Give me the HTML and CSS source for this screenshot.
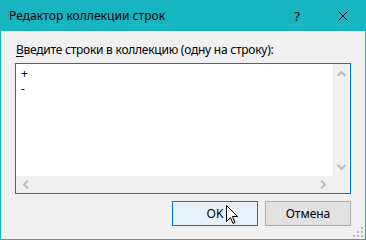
FILE: index.html
```html
<!DOCTYPE html>
<html lang="ru">
<head>
    <meta charset="UTF-8">
    <title>Редактор коллекции строк</title>
    <link rel="stylesheet" href="styles.css">
</head>
<body>

    <div class="window">

        <!-- Заголовок окна -->
        <div class="titlebar">
            <span class="title">Редактор коллекции строк</span>
            <span class="caption-btn">?</span>
            <span class="caption-btn">
                <svg width="10" height="10" viewBox="0 0 10 10"><path d="M0.5 0.5 L9.5 9.5 M9.5 0.5 L0.5 9.5" stroke="#000" stroke-width="1" fill="none"/></svg>
            </span>
        </div>

        <div class="content">
            <div class="label"><u>В</u>ведите строки в коллекцию (одну на строку):</div>

            <div class="textbox">
                <div class="text">
                    <div class="line">+</div>
                    <div class="line">-</div>
                </div>
                <div class="vscroll">
                    <svg width="9" height="6" viewBox="0 0 9 6"><path d="M0.5 5 L4.5 1 L8.5 5" stroke="#bdbdbd" stroke-width="2" fill="none"/></svg>
                    <svg width="9" height="6" viewBox="0 0 9 6"><path d="M0.5 1 L4.5 5 L8.5 1" stroke="#bdbdbd" stroke-width="2" fill="none"/></svg>
                </div>
                <div class="hscroll">
                    <svg width="6" height="9" viewBox="0 0 6 9"><path d="M5 0.5 L1 4.5 L5 8.5" stroke="#bdbdbd" stroke-width="2" fill="none"/></svg>
                    <svg width="6" height="9" viewBox="0 0 6 9"><path d="M1 0.5 L5 4.5 L1 8.5" stroke="#bdbdbd" stroke-width="2" fill="none"/></svg>
                </div>
                <div class="corner"></div>
            </div>

            <div class="buttons">
                <div class="btn btn-default">OK</div>
                <div class="btn">Отмена</div>
            </div>
        </div>

        <!-- Уголок для изменения размера -->
        <svg class="grip" width="10" height="10" viewBox="0 0 10 10" fill="#bdbdbd">
            <rect x="8" y="0" width="2" height="2"/>
            <rect x="4" y="4" width="2" height="2"/>
            <rect x="8" y="4" width="2" height="2"/>
            <rect x="0" y="8" width="2" height="2"/>
            <rect x="4" y="8" width="2" height="2"/>
            <rect x="8" y="8" width="2" height="2"/>
        </svg>

        <!-- Курсор мыши -->
        <svg class="cursor" width="13" height="21" viewBox="0 0 13 21">
            <path d="M0.5 0.5 L0.5 16.5 L4.5 12.5 L7 18.5 L9 17.5 L6.5 11.5 L11.5 11.5 Z" fill="#fff" stroke="#000" stroke-width="1" stroke-linejoin="miter"/>
        </svg>

    </div>

</body>
</html>
```

FILE: styles.css
```css
body {
    margin: 0;
    padding: 0;
    font-family: "Noto Sans", sans-serif;
    font-size: 12px;
    color: #000;
}
.window {
    position: relative;
    width: 366px;
    height: 240px;
    box-sizing: border-box;
    background: #f0f0f0;
    border: 1px solid #17b4c1;
    border-top: none;
}
.titlebar {
    height: 31px;
    margin: 0 -1px;
    background: #17b4c1;
    display: flex;
    align-items: center;
}
.title {
    flex: 1;
    padding-left: 9px;
    letter-spacing: 0.05px;
}
.caption-btn {
    width: 46px;
    height: 31px;
    display: flex;
    align-items: center;
    justify-content: center;
    font-size: 13px;
}
.content {
    padding: 0 14px 0 14px;
}
.label {
    margin-top: 11px;
    height: 16px;
    line-height: 16px;
    padding-left: 1px;
    letter-spacing: -0.25px;
}
.label u {
    text-decoration-thickness: 1px;
    text-underline-offset: 2px;
}
.textbox {
    margin-top: 5px;
    height: 131px;
    box-sizing: border-box;
    border: 1px solid #0078d7;
    background: #fff;
    display: grid;
    grid-template-columns: 1fr 17px;
    grid-template-rows: 1fr 17px;
}
.text {
    padding: 2px 0 0 5px;
}
.line {
    height: 15px;
    line-height: 15px;
}
.vscroll {
    background: #f0f0f0;
    display: flex;
    flex-direction: column;
    justify-content: space-between;
    align-items: center;
    padding: 7px 0 6px;
}
.hscroll {
    background: #f0f0f0;
    display: flex;
    justify-content: space-between;
    align-items: center;
    padding: 0 7px 0 7px;
}
.corner {
    background: #f0f0f0;
}
.buttons {
    margin-top: 7px;
    display: flex;
    justify-content: flex-end;
    gap: 7px;
}
.btn {
    width: 86px;
    height: 25px;
    box-sizing: border-box;
    border: 1px solid #adadad;
    background: #e1e1e1;
    display: flex;
    align-items: center;
    justify-content: center;
}
.btn-default {
    border-color: #0078d7;
    background: #e5f1fb;
}
.grip {
    position: absolute;
    right: 2px;
    bottom: 2px;
}
.cursor {
    position: absolute;
    left: 225px;
    top: 205px;
}
```
